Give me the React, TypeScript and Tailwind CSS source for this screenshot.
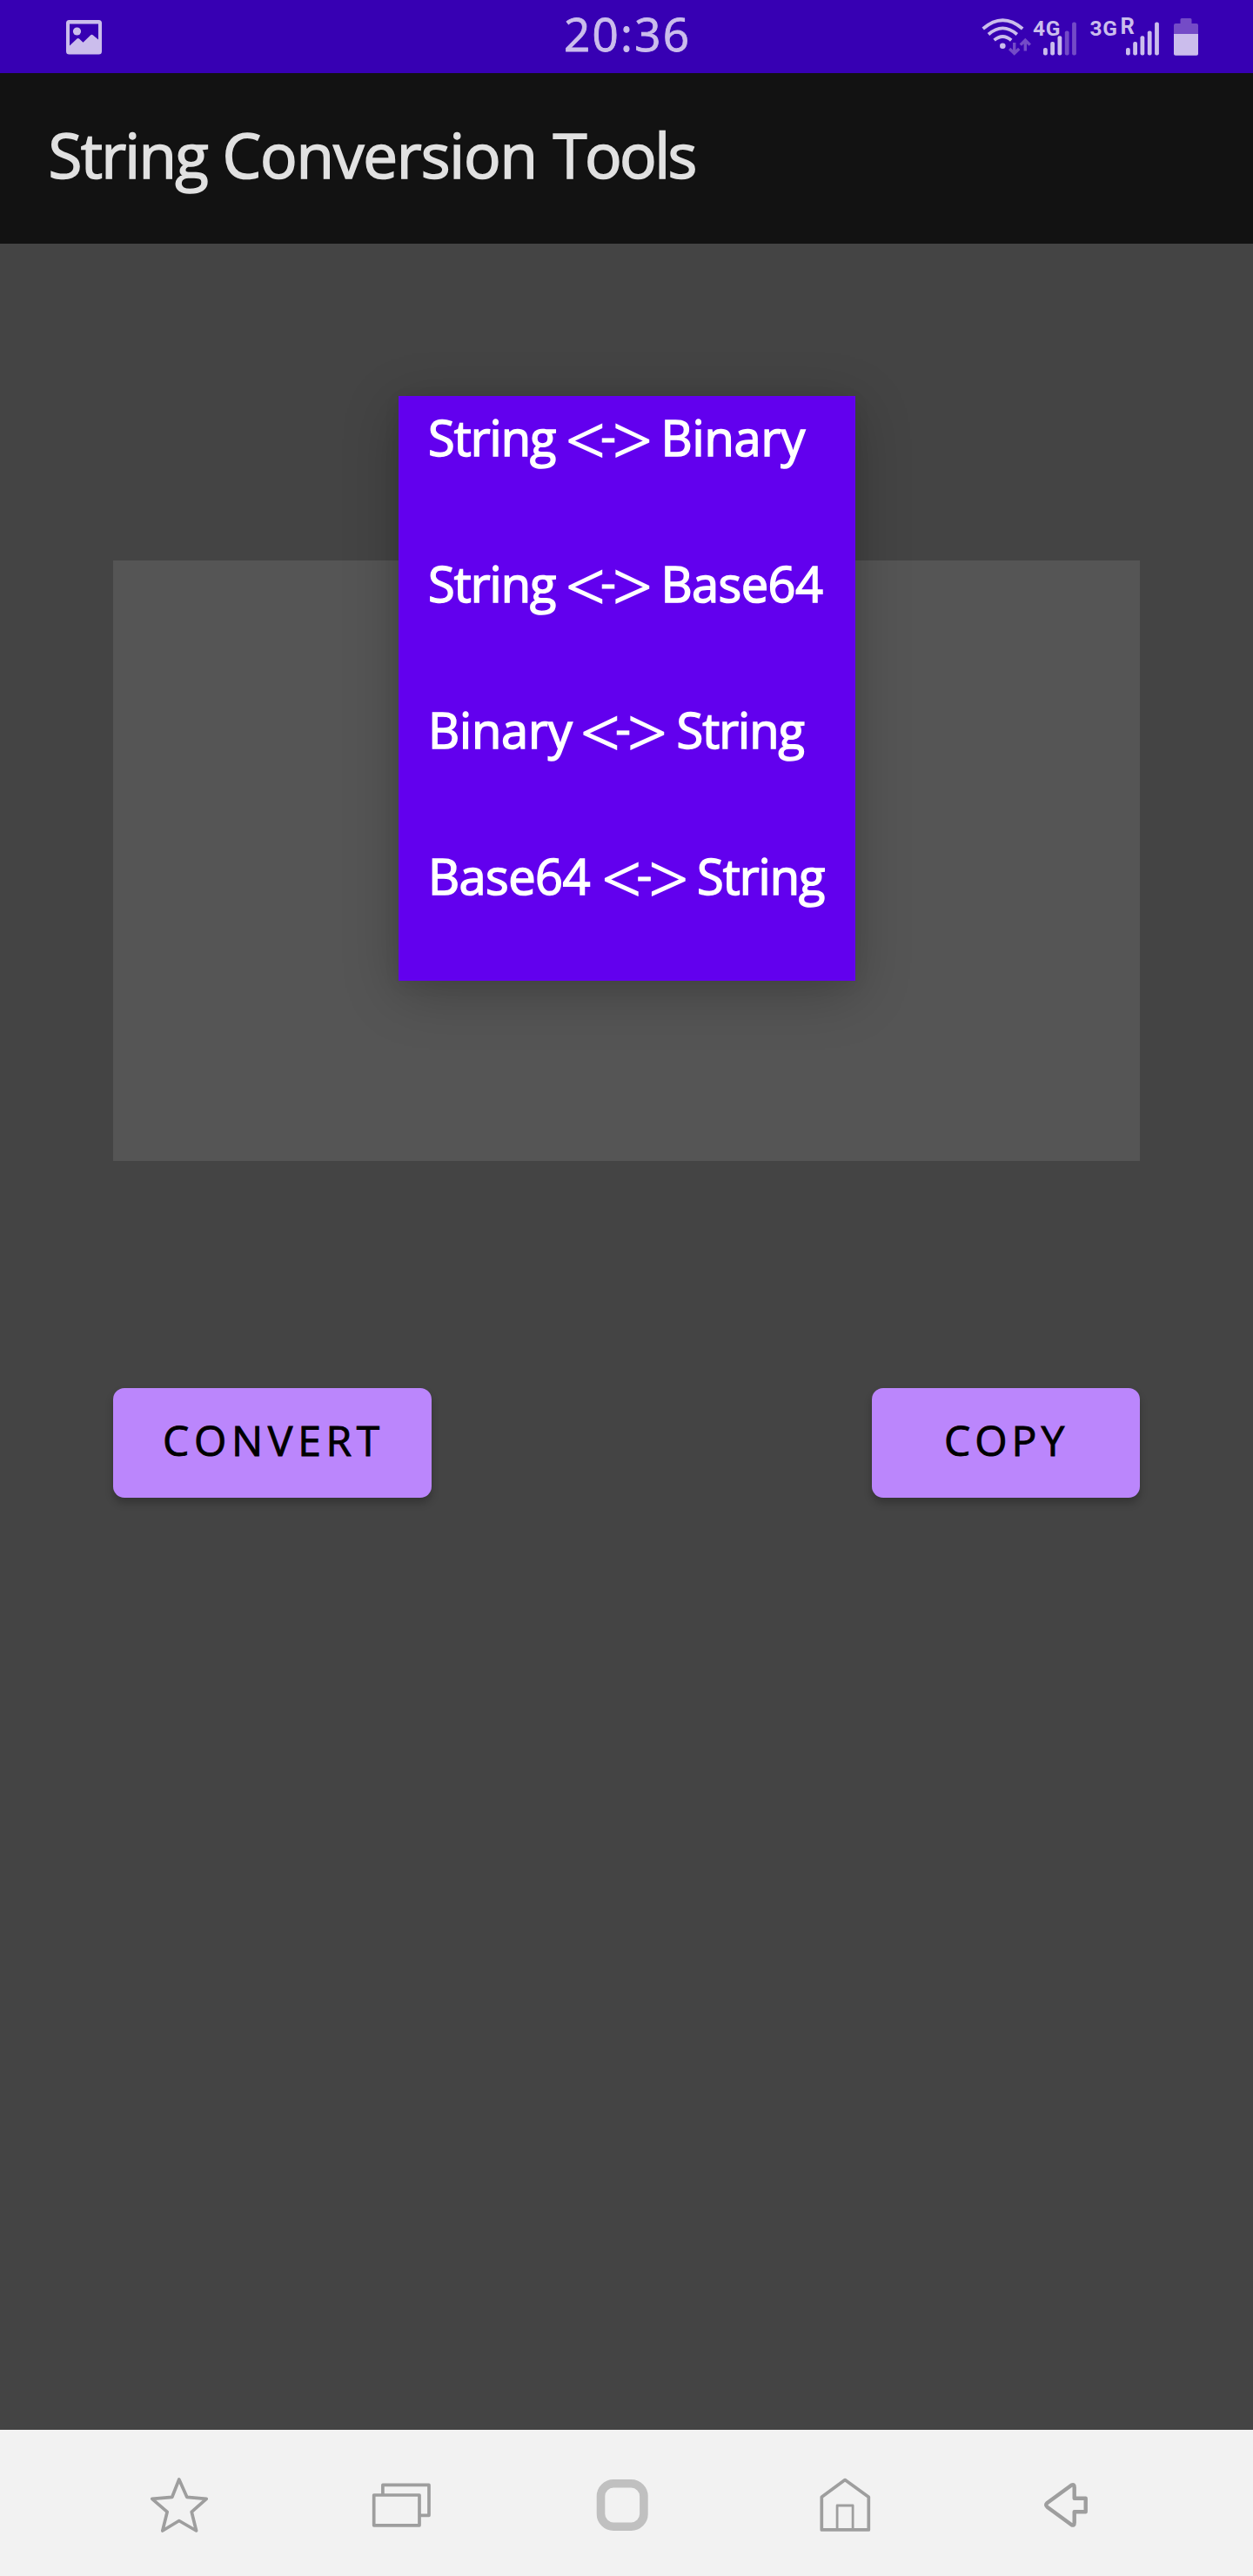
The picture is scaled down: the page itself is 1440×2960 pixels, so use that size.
import type { ReactNode } from "react";

const STATUS = "#cbbdec";
const STATUS_DIM = "#744bc7";
const NAV = "#9e9e9e";

function ImageIcon() {
  return (
    <svg className="h-[40px] w-[41px]" viewBox="0 0 41 40" fill={STATUS}>
      <path
        fillRule="evenodd"
        d="M3.5 0H37.5A3.5 3.5 0 0 1 41 3.5V36A3.5 3.5 0 0 1 37.500 39.500H3.500A3.500 3.500 0 0 1 0 36V3.500A3.500 3.500 0 0 1 3.500 0ZM4 4.500V29.500L12.500 21.600Q13.700 20.600 15 21.600L19.500 25.700L28 17.500Q29.500 16.200 31 17.500L37 22.500V4.500Z"
      />
      <circle cx="12.500" cy="13" r="4.600" />
    </svg>
  );
}

function WifiIcon() {
  return (
    <svg className="h-[84px] w-[60px]" viewBox="26 0 60 84" fill="none">
      <g stroke={STATUS} strokeWidth="3.800">
        <path d="M29.700 33Q52.300 13.500 75.200 33" />
        <path d="M36 39.500Q52.300 25.300 68.800 39.500" />
        <path d="M42.600 46.200Q52.300 37.600 62.200 46.200" />
      </g>
      <circle cx="52.300" cy="52.700" r="3.300" fill={STATUS} />
      <g stroke={STATUS_DIM} strokeWidth="3.400">
        <path d="M65.700 49V61M60.200 56L65.700 61.400L71.200 56" />
        <path d="M78.300 58.500V46M72.800 51.600L78.300 46.200L83.800 51.600" />
      </g>
    </svg>
  );
}

const bars = [
  { x: 0, y: 55 },
  { x: 8.2, y: 48 },
  { x: 16.5, y: 41.3 },
  { x: 24.8, y: 35.6 },
  { x: 33.1, y: 25.6 },
];

function SignalBars({ level }: { level: number }) {
  return (
    <svg className="h-[84px] w-[38px]" viewBox="0 0 38 84">
      {bars.map((b, i) => (
        <rect
          key={b.x}
          x={b.x}
          y={b.y}
          width="4.800"
          height={63.5 - b.y}
          rx="2"
          fill={i < level ? STATUS : STATUS_DIM}
        />
      ))}
    </svg>
  );
}

function BatteryIcon() {
  return (
    <svg className="h-[84px] w-[28px]" viewBox="0 0 28 84">
      <path
        d="M9 21H19Q20.500 21 20.500 22.500V27H26Q28 27 28 29V39H0V29Q0 27 2 27H7.500V22.500Q7.500 21 9 21Z"
        fill={STATUS_DIM}
      />
      <path d="M0 39H28V62Q28 63.700 26 63.700H2Q0 63.700 0 62Z" fill={STATUS} />
    </svg>
  );
}

function StatusBar() {
  return (
    <header className="grid h-[84px] grid-cols-[650px_450px_340px] bg-[#3700b3] text-[#cbbdec]">
      <div className="flex items-start pt-[23px] pl-[76px]">
        <ImageIcon />
      </div>
      <div className="text-[53px] leading-[78px] tracking-[2.200px] [-webkit-text-stroke:0.9px_#cbbdec]">
        <span className="-ml-[2px]">20:36</span>
      </div>
      <div className="flex pl-[26px] font-['Roboto',sans-serif] text-[24.500px] font-bold">
        <WifiIcon />
        <span className="ml-[1px] w-[12px] leading-[65px] tracking-[0.700px] whitespace-nowrap">4G</span>
        <SignalBars level={3} />
        <span className="ml-[15.500px] w-[35px] leading-[65px] tracking-[0.700px]">3G</span>
        <span className="w-[6.700px] text-[25.500px] leading-[60px]">R</span>
        <SignalBars level={5} />
        <div className="ml-[16.500px]">
          <BatteryIcon />
        </div>
      </div>
    </header>
  );
}

function SwapOperator() {
  return (
    <span className="flex h-[94px] w-[100px] leading-[94px]">
      <span className="translate-y-[2px] text-[80px] tracking-[-5.800px] font-light [-webkit-text-stroke:1.7px_white]">
        {"<"}
      </span>
      <span className="-translate-y-[3px] text-[56px] tracking-[-4px] [-webkit-text-stroke:0.9px_white]">-</span>
      <span className="translate-y-[2px] text-[80px] font-light [-webkit-text-stroke:1.7px_white]">{">"}</span>
    </span>
  );
}

function MenuItem({ children }: { children: ReactNode }) {
  return (
    <li className="flex h-[168px] items-start pl-[34px] text-[56px] leading-[94px] whitespace-nowrap text-white [-webkit-text-stroke:1.5px_white]">
      {children}
    </li>
  );
}

function ConversionMenu() {
  return (
    <ul className="absolute top-[175px] left-[458px] h-[672px] w-[525px] bg-[#6200ee] shadow-[0_14px_60px_rgba(0,0,0,0.24),0_4px_18px_rgba(0,0,0,0.06)]">
      <MenuItem>
        <span className="w-[158px] tracking-[-1px]">String</span>
        <SwapOperator />
        <span className="ml-[9.500px] tracking-[-0.200px]">Binary</span>
      </MenuItem>
      <MenuItem>
        <span className="w-[158px] tracking-[-1px]">String</span>
        <SwapOperator />
        <span className="ml-[9.500px] tracking-[-0.600px]">Base64</span>
      </MenuItem>
      <MenuItem>
        <span className="w-[175px] tracking-[-0.200px]">Binary</span>
        <SwapOperator />
        <span className="ml-[10.500px] tracking-[-1px]">String</span>
      </MenuItem>
      <MenuItem>
        <span className="w-[199.500px] tracking-[-0.600px]">Base64</span>
        <SwapOperator />
        <span className="ml-[9.500px] tracking-[-1px]">String</span>
      </MenuItem>
    </ul>
  );
}

const buttonClass =
  "flex h-[126px] items-start rounded-[13px] bg-[#bb86fc] text-[48px] leading-[120px] text-black [-webkit-text-stroke:0.9px_black] shadow-[0_6px_10px_rgba(0,0,0,0.24)]";

function NavIcon({ children }: { children: ReactNode }) {
  return (
    <button className="flex items-center justify-center">
      <svg
        className="h-[72px] w-[72px]"
        viewBox="0 0 72 72"
        fill="none"
        stroke={NAV}
        strokeWidth="3.700"
        strokeLinejoin="round"
      >
        {children}
      </svg>
    </button>
  );
}

function NavigationBar() {
  return (
    <nav className="grid h-[168px] grid-cols-5 bg-[#f2f2f2] pr-[87px] pl-[78px]">
      <NavIcon>
        <path d="M35.800 9L44.800 29.300L67.200 31.300L50.200 46.300L55.600 68L35.800 56.500L16.800 68L22.200 46.300L4.800 31.300L27.800 29.300Z" />
      </NavIcon>
      <NavIcon>
        <path d="M4.700 27H57V61.800H4.700Z" />
        <path d="M14.900 26.500V15.400H68V50.300H57" />
      </NavIcon>
      <NavIcon>
        <rect x="10.500" y="13.800" width="49.400" height="49.400" rx="14.500" stroke="#c0c0c0" strokeWidth="9.600" />
      </NavIcon>
      <NavIcon>
        <path d="M9.300 29.200L36.100 9.600L63.300 29.200V66.900H9.300Z" />
        <path d="M27.100 66.500V39H45.100V66.500" strokeWidth="2.800" />
      </NavIcon>
      <NavIcon>
        <path
          d="M13.500 36L41.200 15.700Q44.700 13.800 44.700 18V30.700H57.700V46.200H44.700V58.700Q44.700 63 41.200 61L13.500 40.700Q10.800 38.300 13.500 36Z"
          strokeWidth="4.400"
        />
      </NavIcon>
    </nav>
  );
}

export default function App() {
  return (
    <div className="flex h-[2960px] w-[1440px] flex-col overflow-hidden bg-[#444444] font-['Open_Sans',sans-serif]">
      <StatusBar />
      <div className="h-[196px] bg-[#121212] pl-[55.500px]">
        <h1 className="flex text-[71px] leading-[188px] whitespace-nowrap text-[#e1e1e1] [-webkit-text-stroke:1.5px_#e1e1e1]">
          <span className="w-[200px] tracking-[-1.800px]">String</span>
          <span className="w-[380px] tracking-[-1.200px]">Conversion</span>
          <span className="tracking-[-2.600px]">Tools</span>
        </h1>
      </div>
      <main className="relative flex-1 px-[130px] pt-[364px]">
        <div className="h-[690px] bg-[#555555]" />
        <div className="mt-[261px] flex justify-between">
          <button className={buttonClass + " w-[366px] pl-[57px] tracking-[5.700px]"}>CONVERT</button>
          <button className={buttonClass + " w-[308px] pl-[83px] tracking-[5px]"}>COPY</button>
        </div>
        <ConversionMenu />
      </main>
      <NavigationBar />
    </div>
  );
}
